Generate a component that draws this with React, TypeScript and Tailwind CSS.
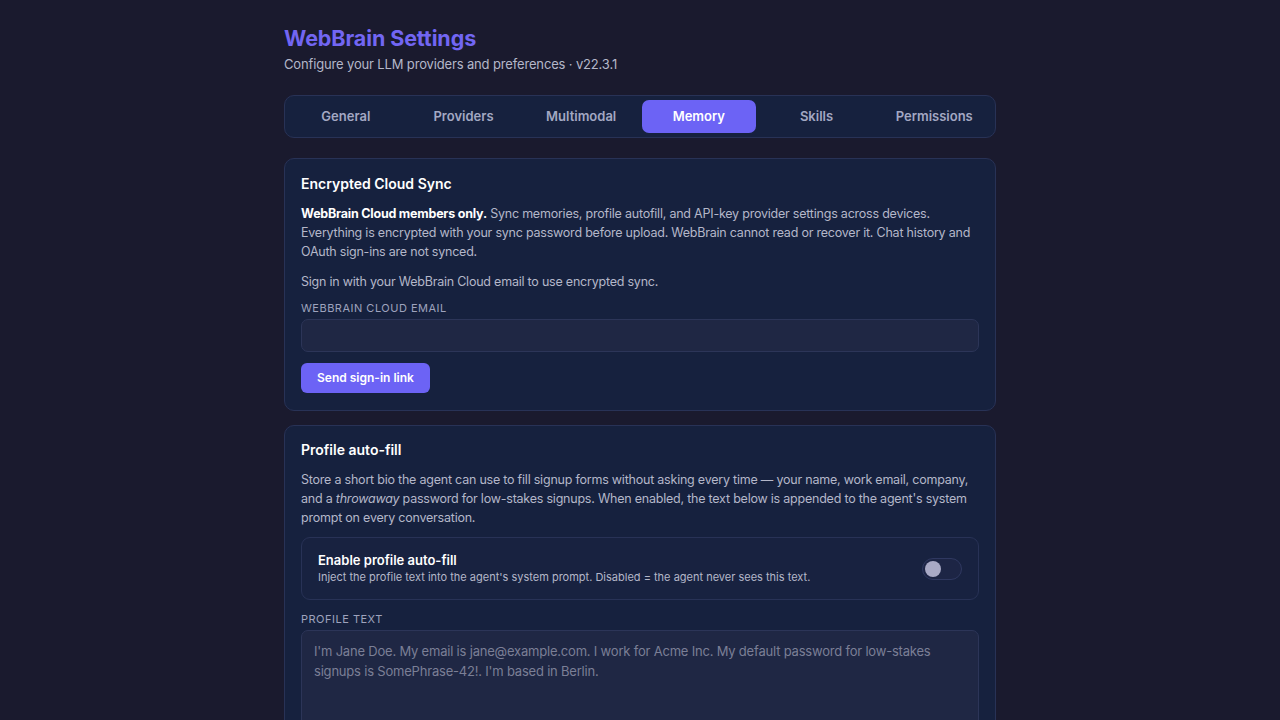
import { useState } from "react";

const tabs = ["General", "Providers", "Multimodal", "Memory", "Skills", "Permissions"];

export default function App() {
	const [active, setActive] = useState("Memory");
	const [enabled, setEnabled] = useState(false);

	return (
		<div
			className="min-h-screen bg-[#1a1a2e] text-[#e4e6f0]"
			style={{ fontFamily: "Inter, 'Noto Sans', sans-serif" }}
		>
			<div className="mx-auto w-[712px] pt-[24px] pb-10">
				<h1 className="text-[21.5px] font-bold leading-[28px] tracking-[-0.1px] text-[#7266f3]">WebBrain Settings</h1>
				<p className="mt-[3px] text-[13px] leading-[18px] tracking-[-0.15px] text-[#b4b7c9]">
					Configure your LLM providers and preferences · v22.3.1
				</p>

				<div className="mt-[22px] flex gap-[4px] rounded-[10px] border border-[#283256] bg-[#16213e] p-[4px]">
					{tabs.map((tab) => (
						<button
							key={tab}
							type="button"
							onClick={() => setActive(tab)}
							className={
								tab === active
									? "h-[33px] flex-1 rounded-[7px] bg-[#6c63f5] text-[13px] font-semibold text-white"
									: "h-[33px] flex-1 rounded-[7px] text-[13px] font-semibold text-[#a3a8c3] hover:text-white"
							}
						>
							{tab}
						</button>
					))}
				</div>

				<section className="mt-[20px] rounded-[10px] border border-[#283256] bg-[#16213e] px-[16px] pt-[16px] pb-[17px]">
					<h2 className="text-[14px] font-semibold leading-[18px] text-white">Encrypted Cloud Sync</h2>
					<p className="mt-[11px] text-[12.5px] leading-[19px] tracking-[-0.22px] text-[#b4b7c9]">
						<strong className="font-bold text-white">WebBrain Cloud members only.</strong> Sync memories, profile
						autofill, and API-key provider settings across devices. Everything is encrypted with your sync password
						before upload. WebBrain cannot read or recover it. Chat history and OAuth sign-ins are not synced.
					</p>
					<p className="mt-[11px] text-[12.5px] leading-[19px] tracking-[-0.22px] text-[#b4b7c9]">
						Sign in with your WebBrain Cloud email to use encrypted sync.
					</p>
					<label className="mt-[10px] block text-[11px] uppercase leading-[14px] tracking-[0.5px] text-[#9ea3bd]">
						WebBrain Cloud email
					</label>
					<input
						type="email"
						className="mt-[4px] block h-[33px] w-full rounded-[7px] border border-[#2c3558] bg-[#1f2744] px-3 text-[13px] text-white outline-none"
					/>
					<button
						type="button"
						className="mt-[11px] h-[30px] rounded-[6px] bg-[#6c63f5] px-[16px] text-[12px] font-semibold text-white"
					>
						Send sign-in link
					</button>
				</section>

				<section className="mt-[14px] rounded-[10px] border border-[#283256] bg-[#16213e] px-[16px] pt-[15px] pb-[16px]">
					<h2 className="text-[14px] font-semibold leading-[18px] text-white">Profile auto-fill</h2>
					<p className="mt-[11px] text-[12.5px] leading-[19px] tracking-[-0.22px] text-[#b4b7c9]">
						Store a short bio the agent can use to fill signup forms without asking every time — your name, work email,
						company, and a <em>throwaway</em> password for low-stakes signups. When enabled, the text below is appended
						to the agent's system prompt on every conversation.
					</p>

					<div className="mt-[10px] flex items-center justify-between rounded-[9px] border border-[#283256] bg-[#182240] px-[16px] pt-[14px] pb-[14px]">
						<div>
							<div className="text-[13px] font-semibold leading-[17px] text-white">Enable profile auto-fill</div>
							<div className="mt-[1px] text-[11px] leading-[15px] text-[#b4b7c9]">
								Inject the profile text into the agent's system prompt. Disabled = the agent never sees this text.
							</div>
						</div>
						<button
							type="button"
							onClick={() => setEnabled(!enabled)}
							className={
								enabled
									? "flex h-[22px] w-[40px] items-center justify-end rounded-full border border-[#6c63f5] bg-[#6c63f5] px-[2px]"
									: "flex h-[22px] w-[40px] items-center rounded-full border border-[#2f3860] bg-[#1d2545] px-[2px]"
							}
						>
							<span className="h-[16px] w-[16px] rounded-full bg-[#a9aac6]" />
						</button>
					</div>

					<label className="mt-[12px] block text-[11px] uppercase leading-[14px] tracking-[0.5px] text-[#9ea3bd]">
						Profile text
					</label>
					<textarea
						rows={6}
						placeholder="I'm Jane Doe. My email is jane@example.com. I work for Acme Inc. My default password for low-stakes signups is SomePhrase-42!. I'm based in Berlin."
						className="mt-[4px] block h-[140px] w-full resize-none rounded-[7px] border border-[#2c3558] bg-[#1f2744] px-[12px] py-[10px] text-[13px] leading-[20px] tracking-[-0.2px] text-white outline-none placeholder:text-[#7b7f96]"
					/>
				</section>
			</div>
		</div>
	);
}
